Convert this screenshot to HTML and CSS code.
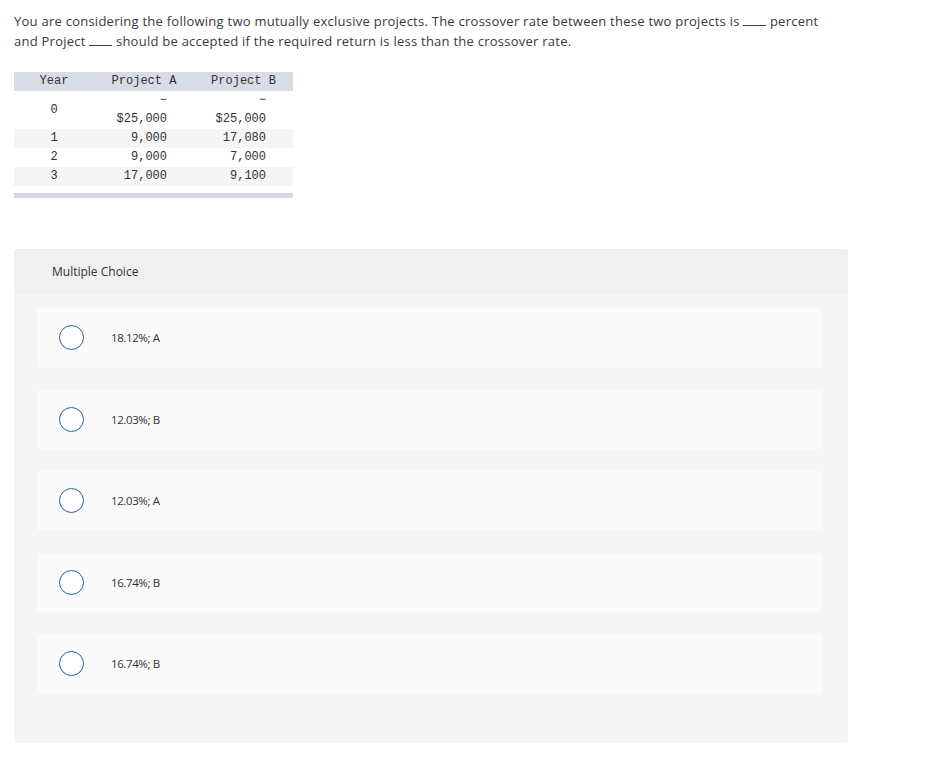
FILE: index.html
```html
<!DOCTYPE html>
<html>
<head>
<meta charset="utf-8">
<link rel="stylesheet" href="styles.css">
</head>
<body>
<p class="question">You are considering the following two mutually exclusive projects. The crossover rate between these two projects is <span class="blank"></span> percent<br>and Project <span class="blank"></span> should be accepted if the required return is less than the crossover rate.</p>

<div class="table-wrap">
  <table class="data">
    <thead>
      <tr><th class="c-year">Year</th><th class="c-a">Project A</th><th class="c-b">Project B</th></tr>
    </thead>
    <tbody>
      <tr class="tall"><td class="year">0</td><td class="num">&minus;<br>$25,000</td><td class="num">&minus;<br>$25,000</td></tr>
      <tr class="shade"><td class="year">1</td><td class="num">9,000</td><td class="num">17,080</td></tr>
      <tr><td class="year">2</td><td class="num">9,000</td><td class="num">7,000</td></tr>
      <tr class="shade"><td class="year">3</td><td class="num">17,000</td><td class="num">9,100</td></tr>
    </tbody>
  </table>
  <div class="table-foot"></div>
</div>

<section class="mc">
  <div class="mc-head">Multiple Choice</div>
  <div class="mc-body">
    <div class="opt"><span class="radio"></span><span class="opt-text">18.12%; A</span></div>
    <div class="opt"><span class="radio"></span><span class="opt-text">12.03%; B</span></div>
    <div class="opt"><span class="radio"></span><span class="opt-text">12.03%; A</span></div>
    <div class="opt"><span class="radio"></span><span class="opt-text">16.74%; B</span></div>
    <div class="opt"><span class="radio"></span><span class="opt-text">16.74%; B</span></div>
  </div>
</section>
</body>
</html>
```

FILE: styles.css
```css
html, body {
  margin: 0;
  padding: 0;
  background: #ffffff;
}
body {
  padding: 12px 14px 0 14px;
  font-family: "Open Sans", Lato, "Liberation Sans", sans-serif;
  color: #3a3a3a;
}
.question {
  margin: 0;
  width: 900px;
  font-size: 13px;
  letter-spacing: 0.25px;
  line-height: 19.5px;
}
.blank {
  display: inline-block;
  width: 23px;
  border-bottom: 1px solid #3a3a3a;
  vertical-align: baseline;
  height: 1px;
}
.table-wrap {
  margin-top: 21px;
  width: 279px;
}
.data {
  border-collapse: collapse;
  width: 279px;
  font-family: "Liberation Mono", "DejaVu Sans Mono", monospace;
  font-size: 12px;
  color: #333;
}
.data th {
  background: #d7dce6;
  font-weight: normal;
  height: 19px;
  padding: 0;
  text-align: center;
  line-height: 19px;
}
.c-year { width: 80px; }
.c-a { width: 100px; }
.c-b { width: 99px; }
.data td {
  padding: 0;
  height: 19px;
  line-height: 19px;
}
.data tr.tall td {
  height: 38px;
}
.data td.year {
  text-align: center;
}
.data td.num {
  text-align: right;
  padding-right: 27px;
}
.data tr.shade td {
  background: #f5f5f5;
}
.table-foot {
  margin-top: 7px;
  height: 5px;
  background: #d3d9e3;
}
.mc {
  margin-top: 51px;
  width: 834px;
  background: #f5f5f5;
  border-radius: 3px;
  overflow: hidden;
}
.mc-head {
  background: #f0f0f0;
  height: 44px;
  padding-left: 38px;
  display: flex;
  align-items: center;
  font-size: 12px;
  color: #333;
}
.mc-body {
  padding: 15px 26px 49px 23px;
  display: flex;
  flex-direction: column;
  gap: 22px;
}
.opt {
  height: 59.5px;
  background: #fafafa;
  border-radius: 3px;
  display: flex;
  align-items: center;
  padding-left: 22px;
}
.radio {
  width: 23px;
  height: 23px;
  border: 1.5px solid #2b5f95;
  border-radius: 50%;
  background: #ffffff;
  flex: none;
}
.opt-text {
  margin-left: 27px;
  font-size: 11.5px;
  color: #333;
  letter-spacing: -0.4px;
}
```
